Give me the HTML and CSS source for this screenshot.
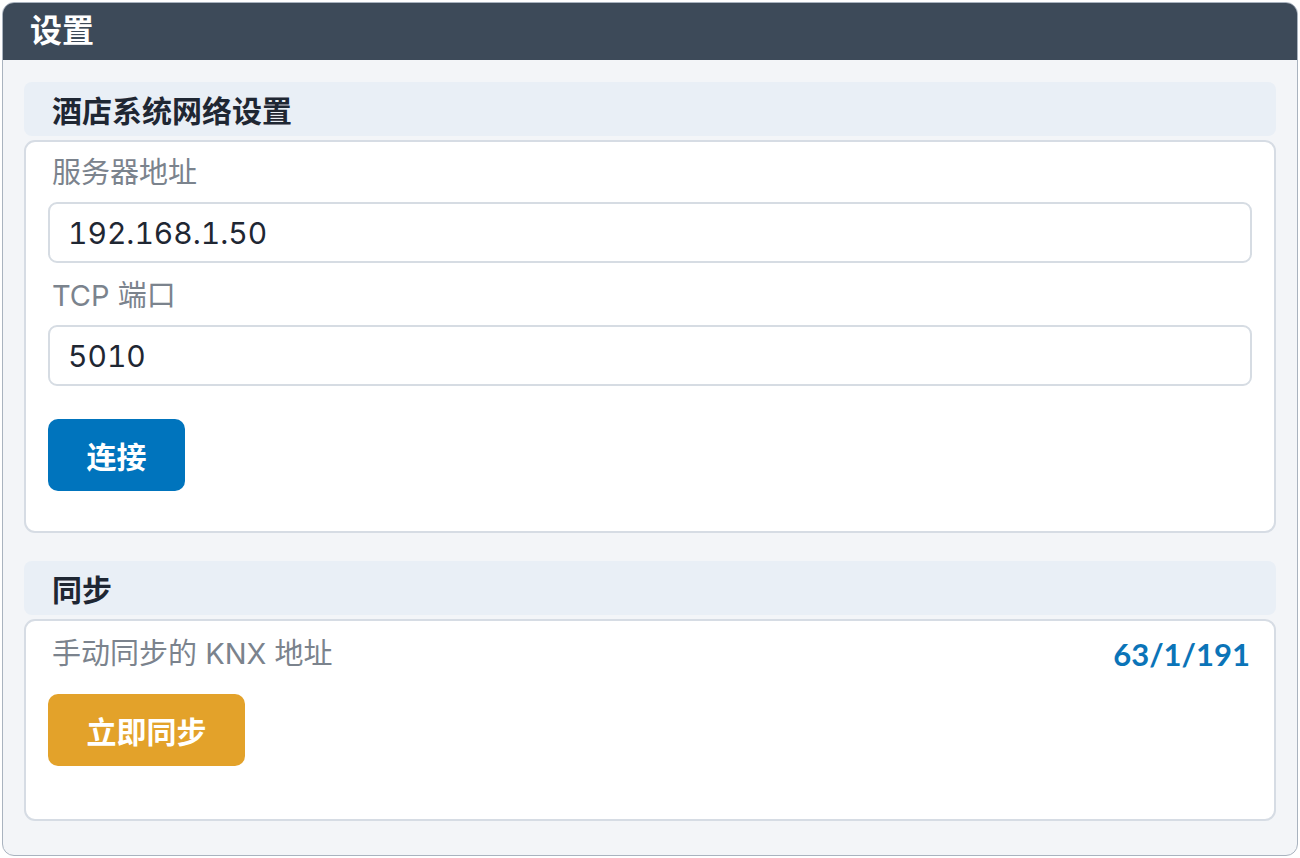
FILE: index.html
```html
<!DOCTYPE html>
<html lang="zh-CN">
<head>
<meta charset="utf-8">
<title>设置</title>
<link rel="stylesheet" href="styles.css">
</head>
<body>
<div class="frame">
  <header class="topbar"><h1 class="title">设置</h1></header>
  <main class="content">
    <section class="section">
      <h2 class="section-head">酒店系统网络设置</h2>
      <div class="card card-net">
        <label class="label">服务器地址</label>
        <div class="input">192.168.1.50</div>
        <label class="label">TCP 端口</label>
        <div class="input">5010</div>
        <button class="btn btn-blue">连接</button>
      </div>
    </section>
    <section class="section">
      <h2 class="section-head">同步</h2>
      <div class="card card-sync">
        <div class="row">
          <span class="label">手动同步的 KNX 地址</span>
          <span class="value">63/1/191</span>
        </div>
        <button class="btn btn-orange">立即同步</button>
      </div>
    </section>
  </main>
</div>
</body>
</html>
```

FILE: styles.css
```css
* { box-sizing: border-box; }
html, body { margin: 0; padding: 0; background: #ffffff; }
body {
  padding: 2px;
  font-family: "Inter", "Noto Sans CJK SC", sans-serif;
  color: #1f2937;
}
.frame {
  width: 1296px;
  height: 854px;
  border: 1px solid #a9b3bf;
  border-radius: 12px;
  background: #f3f5f8;
  overflow: hidden;
  display: flex;
  flex-direction: column;
}
.topbar {
  height: 57px;
  background: #3d4a59;
  display: flex;
  align-items: center;
  padding-left: 27px;
  padding-bottom: 8px;
  flex-shrink: 0;
}
.title {
  margin: 0;
  font-size: 32px;
  font-weight: 700;
  color: #ffffff;
  line-height: 1;
  font-family: "Noto Sans CJK SC", sans-serif;
}
.content {
  padding: 22px 21px 0 21px;
  display: flex;
  flex-direction: column;
  gap: 28px;
}
.section { display: flex; flex-direction: column; gap: 4px; }
.section-head {
  margin: 0;
  height: 54px;
  background: #e9eff6;
  border-radius: 8px;
  display: flex;
  align-items: center;
  padding-left: 28px;
  font-size: 30px;
  font-weight: 700;
  color: #1f2733;
  font-family: "Noto Sans CJK SC", sans-serif;
}
.card {
  background: #ffffff;
  border: 2px solid #d6dce4;
  border-radius: 11px;
  padding: 14px 22px 40px 22px;
  display: flex;
  flex-direction: column;
  align-items: stretch;
}
.label {
  display: block;
  font-size: 29px;
  line-height: 34px;
  color: #7b838d;
  padding-left: 4px;
  margin-bottom: 12px;
  font-family: "Inter", "Noto Sans CJK SC", sans-serif;
}
.input {
  height: 61px;
  border: 2px solid #d6dce3;
  border-radius: 9px;
  display: flex;
  align-items: center;
  padding-left: 18px;
  font-size: 30px;
  font-variant-numeric: tabular-nums;
  color: #1f2733;
  margin-bottom: 16px;
  font-family: "Inter", sans-serif;
}
.btn {
  align-self: flex-start;
  border: none;
  color: #ffffff;
  font-family: "Noto Sans CJK SC", sans-serif;
  font-size: 30px;
  font-weight: 700;
  height: 72px;
  border-radius: 10px;
  padding: 0;
}
.btn-blue { background: #0074bd; width: 137px; margin-top: 17px; }
.btn-orange { background: #e3a22a; width: 197px; }
.card-sync { padding-top: 16px; padding-bottom: 53px; }
.row {
  display: flex;
  justify-content: space-between;
  align-items: center;
  margin-bottom: 23px;
}
.row .label { margin-bottom: 0; }
.value {
  font-size: 31px;
  font-weight: 700;
  color: #0b74b8;
  line-height: 34px;
  padding-right: 2px;
  font-family: "Lato", sans-serif;
}
```
